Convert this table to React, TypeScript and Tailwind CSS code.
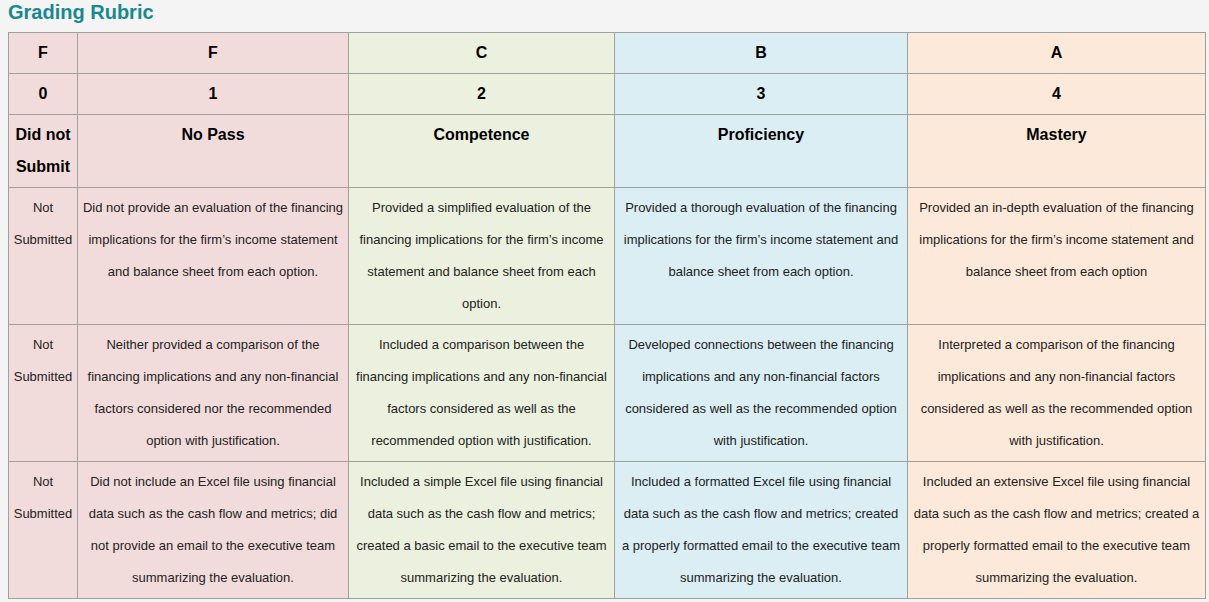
const cols = [
  { bg: 'bg-[#f2dcdb]', w: 'w-[69px]' },
  { bg: 'bg-[#f2dcdb]', w: 'w-[271px]' },
  { bg: 'bg-[#ebf1de]', w: 'w-[266px]' },
  { bg: 'bg-[#daeef3]', w: 'w-[293px]' },
  { bg: 'bg-[#fde9d9]', w: 'w-[298px]' },
]

const headerRows = [
  ['F', 'F', 'C', 'B', 'A'],
  ['0', '1', '2', '3', '4'],
  ['Did not Submit', 'No Pass', 'Competence', 'Proficiency', 'Mastery'],
]

const bodyRows = [
  [
    'Not Submitted',
    'Did not provide an evaluation of the financing implications for the firm’s income statement and balance sheet from each option.',
    'Provided a simplified evaluation of the financing implications for the firm’s income statement and balance sheet from each option.',
    'Provided a thorough evaluation of the financing implications for the firm’s income statement and balance sheet from each option.',
    'Provided an in-depth evaluation of the financing implications for the firm’s income statement and balance sheet from each option',
  ],
  [
    'Not Submitted',
    'Neither provided a comparison of the financing implications and any non-financial factors considered nor the recommended option with justification.',
    'Included a comparison between the financing implications and any non-financial factors considered as well as the recommended option with justification.',
    'Developed connections between the financing implications and any non-financial factors considered as well as the recommended option with justification.',
    'Interpreted a comparison of the financing implications and any non-financial factors considered as well as the recommended option with justification.',
  ],
  [
    'Not Submitted',
    'Did not include an Excel file using financial data such as the cash flow and metrics; did not provide an email to the executive team summarizing the evaluation.',
    'Included a simple Excel file using financial data such as the cash flow and metrics; created a basic email to the executive team summarizing the evaluation.',
    'Included a formatted Excel file using financial data such as the cash flow and metrics; created a properly formatted email to the executive team summarizing the evaluation.',
    'Included an extensive Excel file using financial data such as the cash flow and metrics; created a properly formatted email to the executive team summarizing the evaluation.',
  ],
]

export default function App() {
  return (
    <div className="min-h-screen bg-[#f4f4f4] px-2 font-['Liberation_Sans',Arial,sans-serif]">
      <h2 className="h-6 text-[20px] leading-6 font-bold text-[#17898f]">Grading Rubric</h2>

      <table className="mt-2 w-[1197px] table-fixed border-collapse">
        <colgroup>
          {cols.map((c, i) => (
            <col key={i} className={c.w} />
          ))}
        </colgroup>
        <thead>
          {headerRows.map((row, r) => (
            <tr key={r}>
              {row.map((cell, i) => (
                <th
                  key={i}
                  className={`${cols[i].bg} border border-[#a0a0a0] px-1 py-1 text-center align-top text-[16px] leading-8 font-bold text-black`}
                >
                  {cell}
                </th>
              ))}
            </tr>
          ))}
        </thead>
        <tbody>
          {bodyRows.map((row, r) => (
            <tr key={r}>
              {row.map((cell, i) => (
                <td
                  key={i}
                  className={`${cols[i].bg} border border-[#a0a0a0] px-1 py-1 text-center align-top text-[13px] leading-8 text-[#222]`}
                >
                  {cell}
                </td>
              ))}
            </tr>
          ))}
        </tbody>
      </table>
    </div>
  )
}
